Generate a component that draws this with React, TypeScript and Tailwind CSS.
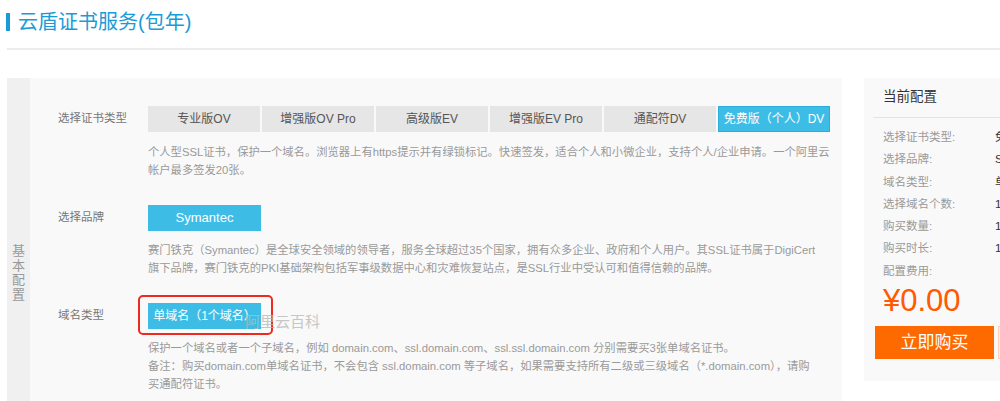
import React from 'react'

const tabs = ['专业版OV', '增强版OV Pro', '高级版EV', '增强版EV Pro', '通配符DV', '免费版（个人）DV']

const summary: [string, string][] = [
	['选择证书类型:', '免费版（个人）DV'],
	['选择品牌:', 'Symantec'],
	['域名类型:', '单域名'],
	['选择域名个数:', '1'],
	['购买数量:', '1'],
	['购买时长:', '1年'],
	['配置费用:', '']
]

function Row({ label, children }: { label: string; children: React.ReactNode }) {
	return (
		<div className="flex items-start">
			<div className="w-[90px] h-[26px] flex items-center text-[11.5px] text-[#777] shrink-0">{label}</div>
			<div className="flex flex-col">{children}</div>
		</div>
	)
}

function Desc({ lines, first = 10 }: { lines: string[]; first?: number }) {
	return (
		<div className={`${first === 11 ? 'mt-[11px]' : 'mt-[10px]'} text-[11.3px] leading-[18px] text-[#999] whitespace-nowrap`}>
			{lines.map((l) => (
				<div key={l}>{l}</div>
			))}
		</div>
	)
}

export default function App() {
	return (
		<div className="w-[1000px] h-[401px] overflow-hidden bg-white font-['Liberation_Sans','Noto_Sans_CJK_SC',sans-serif]">
			{/* Title */}
			<div className="pt-[9px] pl-[6px] h-[35px] flex items-center gap-[8px]">
				<div className="w-[4px] h-[18px] bg-[#1a9bd7]" />
				<h1 className="text-[20px] leading-[26px] text-[#1a9bd7]">云盾证书服务(包年)</h1>
			</div>
			<div className="ml-[7px] mt-[13px] h-[2px] bg-[#ececec]" />

			<div className="mt-[28px] ml-[7px] flex items-start gap-[22px]">
				{/* Main config panel */}
				<main className="w-[835px] h-[340px] shrink-0 bg-[#f9f9f9] flex">
					<div className="w-[23px] bg-[#f0f0f0] pt-[166px] flex flex-col items-center text-[13px] leading-[14.5px] text-[#999]">
						<span>基</span>
						<span>本</span>
						<span>配</span>
						<span>置</span>
					</div>
					<div className="pl-[28px] pt-[28px] flex flex-col">
						<Row label="选择证书类型">
							<div className="flex gap-[2px]">
								{tabs.map((t, i) => (
									<button
										key={t}
										className={
											i === tabs.length - 1
												? 'w-[112px] h-[26px] shrink-0 whitespace-nowrap text-[12px] bg-[#3dbde6] border border-[#2aaedb] text-white'
												: 'w-[112px] h-[26px] shrink-0 whitespace-nowrap text-[12px] bg-[#e6e6e6] text-[#555]'
										}
									>
										{t}
									</button>
								))}
							</div>
							<Desc
								first={11}
								lines={[
									'个人型SSL证书，保护一个域名。浏览器上有https提示并有绿锁标记。快速签发，适合个人和小微企业，支持个人/企业申请。一个阿里云',
									'帐户最多签发20张。'
								]}
							/>
						</Row>

						<div className="mt-[26px]">
							<Row label="选择品牌">
								<button className="w-[113px] h-[26px] text-[13px] bg-[#3dbde6] text-white">Symantec</button>
								<Desc
									lines={[
										'赛门铁克（Symantec）是全球安全领域的领导者，服务全球超过35个国家，拥有众多企业、政府和个人用户。其SSL证书属于DigiCert',
										'旗下品牌，赛门铁克的PKI基础架构包括军事级数据中心和灾难恢复站点，是SSL行业中受认可和值得信赖的品牌。'
									]}
								/>
							</Row>
						</div>

						<div className="mt-[26px]">
							<Row label="域名类型">
								<div className="relative">
									<button className="w-[113px] h-[26px] text-[12px] bg-[#3dbde6] text-white whitespace-nowrap">单域名（1个域名）</button>
									<div className="absolute left-[-10px] top-[-8px] w-[135px] h-[40px] border-2 border-[#ee2a1f] rounded-[5px]" />
									<div className="absolute left-[97px] top-[9px] text-[15px] leading-[20px] text-[#b8b8b8]/80 whitespace-nowrap">阿里云百科</div>
								</div>
								<Desc
									lines={[
										'保护一个域名或者一个子域名，例如 domain.com、ssl.domain.com、ssl.ssl.domain.com 分别需要买3张单域名证书。',
										'备注：购买domain.com单域名证书，不会包含 ssl.domain.com 等子域名，如果需要支持所有二级或三级域名（*.domain.com），请购',
										'买通配符证书。'
									]}
								/>
							</Row>
						</div>
					</div>
				</main>

				{/* Current config sidebar */}
				<aside className="w-[200px] shrink-0 bg-[#f9f9f9] pb-[22px]">
					<div className="ml-[9px] h-[40px] border-b border-[#e3e3e3] flex items-center pl-[10px] text-[13.5px] text-[#333]">
						当前配置
					</div>
					<div className="pl-[19px] pt-[8px] grid grid-cols-[112px_auto] text-[11.5px] leading-[22.3px] text-[#999] whitespace-nowrap">
						{summary.map(([k, v]) => (
							<React.Fragment key={k}>
								<span>{k}</span>
								<span className="text-[#333]">{v}</span>
							</React.Fragment>
						))}
					</div>
					<div className="pl-[19px] mt-[1px] text-[31px] leading-[36px] text-[#ff5a00]">¥0.00</div>
					<div className="pl-[11px] mt-[7px] flex gap-[4px]">
						<button className="w-[119px] h-[33px] shrink-0 bg-[#ff6a00] text-white text-[17px]">立即购买</button>
						<button className="w-[100px] h-[33px] shrink-0 bg-[#fff1e8] border border-[#ffd0b3] text-[#ff6a00] text-[15px]">加入清单</button>
					</div>
				</aside>
			</div>
		</div>
	)
}
